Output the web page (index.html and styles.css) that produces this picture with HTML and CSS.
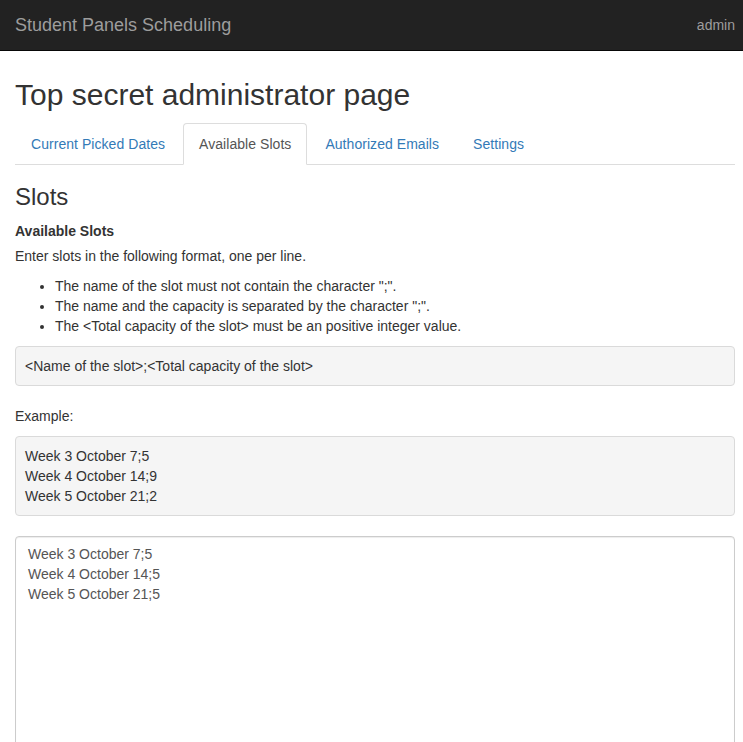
FILE: index.html
```html
<!DOCTYPE html>
<html>
<head>
<meta charset="utf-8">
<title>Student Panels Scheduling</title>
<link rel="stylesheet" href="styles.css">
</head>
<body>
<nav class="navbar">
  <a class="brand" href="#">Student Panels Scheduling</a>
  <a class="nav-user" href="#">admin</a>
</nav>
<main class="container">
  <h1 class="page-title">Top secret administrator page</h1>
  <ul class="tabs">
    <li><a href="#">Current Picked Dates</a></li>
    <li class="active"><a href="#">Available Slots</a></li>
    <li><a href="#">Authorized Emails</a></li>
    <li><a href="#">Settings</a></li>
  </ul>
  <h3 class="section-title">Slots</h3>
  <label class="field-label">Available Slots</label>
  <p class="text">Enter slots in the following format, one per line.</p>
  <ul class="rules">
    <li>The name of the slot must not contain the character ";".</li>
    <li>The name and the capacity is separated by the character ";".</li>
    <li>The &lt;Total capacity of the slot&gt; must be an positive integer value.</li>
  </ul>
  <pre class="code">&lt;Name of the slot&gt;;&lt;Total capacity of the slot&gt;</pre>
  <p class="text">Example:</p>
  <pre class="code">Week 3 October 7;5
Week 4 October 14;9
Week 5 October 21;2</pre>
  <textarea class="slots-input">Week 3 October 7;5
Week 4 October 14;5
Week 5 October 21;5</textarea>
</main>
</body>
</html>
```
FILE: styles.css
```css
html, body {
  margin: 0;
  padding: 0;
}
body {
  font-family: "Liberation Sans", Arial, Helvetica, sans-serif;
  font-size: 14px;
  line-height: 20px;
  color: #333;
  background: #fff;
}
a {
  text-decoration: none;
}
.navbar {
  display: flex;
  justify-content: space-between;
  align-items: center;
  height: 50px;
  background: #222;
  border-bottom: 1px solid #080808;
  padding: 0 8px 0 15px;
}
.brand {
  color: #9d9d9d;
  font-size: 18px;
  line-height: 20px;
}
.nav-user {
  color: #9d9d9d;
  font-size: 14px;
  line-height: 20px;
}
.container {
  padding: 0 8px 0 15px;
}
.page-title {
  margin: 27px 0 12px;
  font-size: 30px;
  line-height: 1.1;
  font-weight: 500;
  color: #333;
}
.tabs {
  display: flex;
  list-style: none;
  margin: 0;
  padding: 0;
  border-bottom: 1px solid #ddd;
}
.tabs li {
  margin-bottom: -1px;
  margin-right: 2px;
}
.tabs a {
  display: block;
  padding: 10px 15px;
  line-height: 20px;
  letter-spacing: 0.05px;
  color: #337ab7;
  border: 1px solid transparent;
  border-radius: 4px 4px 0 0;
}
.tabs li.active a {
  color: #555;
  background: #fff;
  border-color: #ddd;
  border-bottom-color: transparent;
}
.section-title {
  margin: 19px 0 11px;
  font-size: 24px;
  line-height: 1.1;
  font-weight: 500;
}
.field-label {
  display: inline-block;
  font-weight: bold;
  margin-bottom: 5px;
}
.text {
  margin: 0 0 10px;
}
.rules {
  margin: 0 0 10px;
  padding-left: 40px;
}
.code {
  font-family: "Liberation Sans", Arial, Helvetica, sans-serif;
  font-size: 14px;
  line-height: 20px;
  color: #333;
  background: #f5f5f5;
  border: 1px solid #dadada;
  border-radius: 4px;
  padding: 9px 9px;
  margin: 0 0 20px;
  white-space: pre;
}
.slots-input {
  display: block;
  box-sizing: border-box;
  width: 100%;
  height: 320px;
  margin: 1px 0 0;
  padding: 7px 12px 5px;
  font-family: "Liberation Sans", Arial, Helvetica, sans-serif;
  font-size: 14px;
  line-height: 20px;
  color: #555;
  background: #fff;
  border: 1px solid #ccc;
  border-radius: 4px;
  box-shadow: inset 0 1px 1px rgba(0,0,0,.075);
  resize: vertical;
}
```
